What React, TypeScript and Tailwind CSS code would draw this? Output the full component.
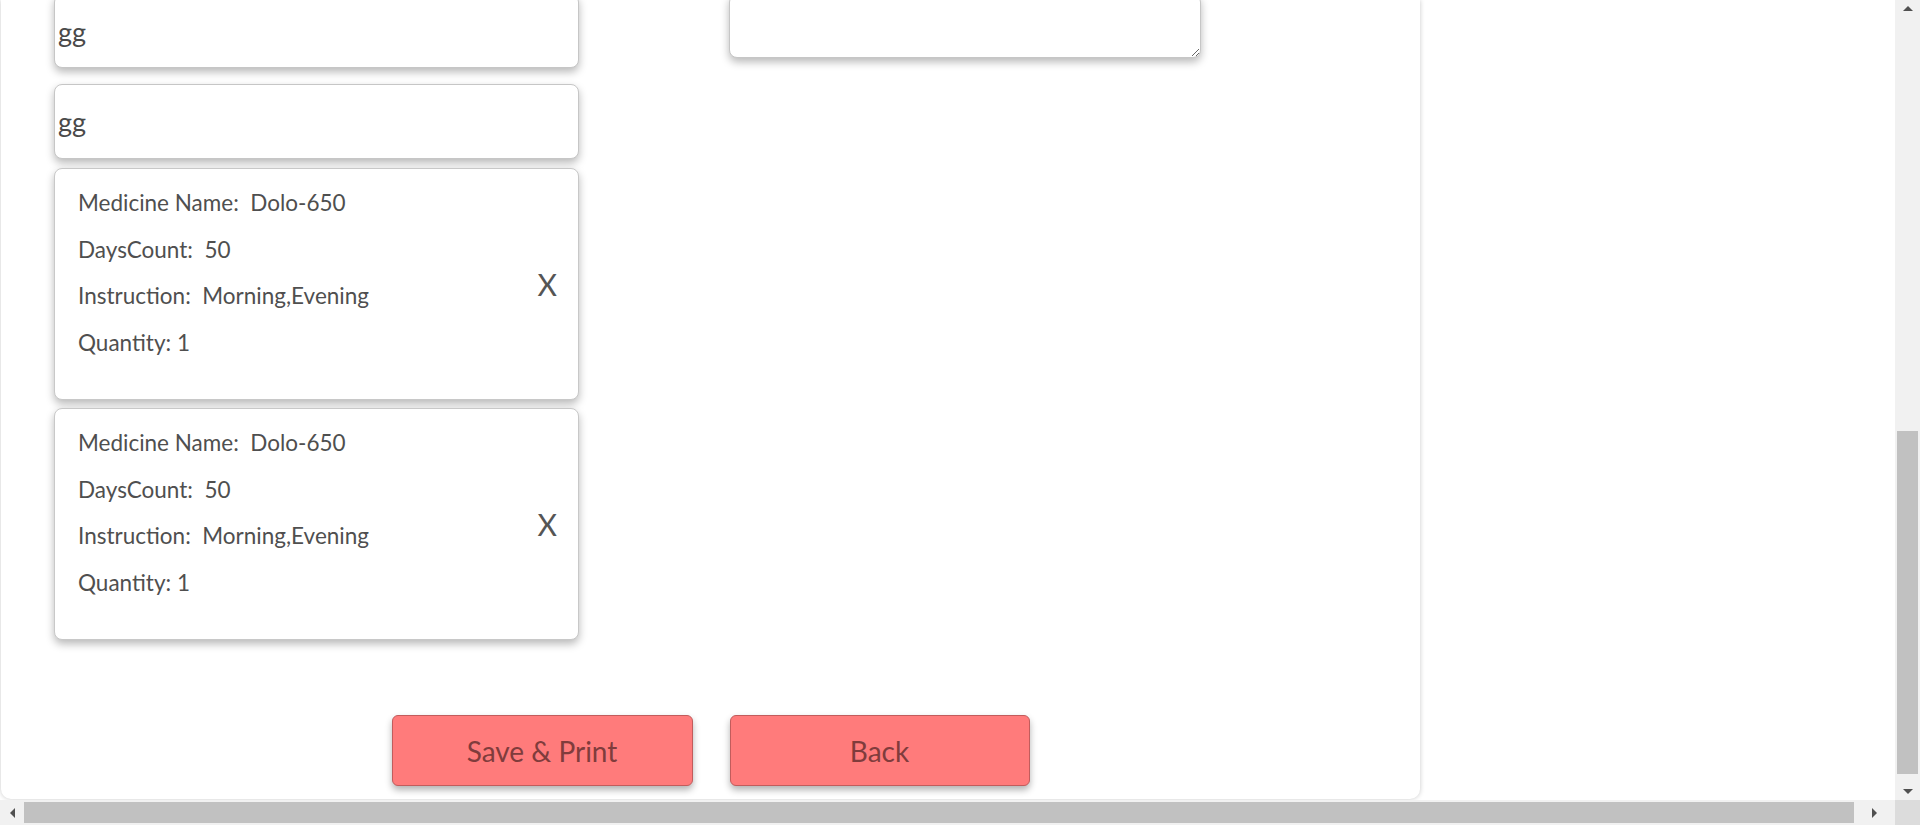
import React from "react";

type Medicine = {
  name: string;
  days: number;
  instruction: string;
  quantity: number;
};

const medicines: Medicine[] = [
  { name: "Dolo-650", days: 50, instruction: "Morning,Evening", quantity: 1 },
  { name: "Dolo-650", days: 50, instruction: "Morning,Evening", quantity: 1 },
];

function MedicineCard({ med }: { med: Medicine }) {
  return (
    <div className="flex h-[232px] items-center justify-between rounded-[8px] border border-[#c8c8c8] bg-white pl-[23px] pr-[21px] shadow-[0_4px_8px_rgba(0,0,0,0.28)]">
      <div className="flex flex-col gap-[16.5px] self-start pt-[19px] text-[22.5px] leading-[30px] text-[#4f4f4f]">
        <p>Medicine Name:{"\u00a0 "}{med.name}</p>
        <p>DaysCount:{"\u00a0 "}{med.days}</p>
        <p>Instruction:{"\u00a0 "}{med.instruction}</p>
        <p>Quantity:{"\u00a0"}{med.quantity}</p>
      </div>
      <button className="text-[30px] leading-none text-[#555]">X</button>
    </div>
  );
}

function Arrow({ dir }: { dir: "up" | "down" | "left" | "right" }) {
  const pts = {
    up: "0,6 5,1 10,6",
    down: "0,1 5,6 10,1",
    left: "6,0 1,5 6,10",
    right: "1,0 6,5 1,10",
  }[dir];
  const size = dir === "up" || dir === "down" ? "w-[10px] h-[7px]" : "w-[7px] h-[10px]";
  const vb = dir === "up" || dir === "down" ? "0 0 10 7" : "0 0 7 10";
  return (
    <svg viewBox={vb} className={size}>
      <polygon points={pts} fill="#505050" />
    </svg>
  );
}

export default function App() {
  return (
    <div className="flex h-[825px] w-[1920px] flex-col overflow-hidden bg-white font-['Lato',sans-serif]">
      <div className="flex min-h-0 flex-1">
        {/* page, scrolled to the bottom */}
        <div className="min-w-0 flex-1 overflow-hidden">
          <div className="ml-px flex h-[799px] w-[1419px] flex-col overflow-hidden rounded-b-[10px] bg-white shadow-[0_0_5px_rgba(0,0,0,0.22)]">
            <div className="-mt-[6px] flex pl-[53px]">
              <div className="flex w-[525px] flex-col">
                <input
                  readOnly
                  defaultValue="gg"
                  className="h-[74px] rounded-[8px] border border-[#c6c6c6] bg-white px-[3px] text-[27px] text-[#4a4a4a] shadow-[0_4px_8px_rgba(0,0,0,0.28)] outline-none"
                />
                <input
                  readOnly
                  defaultValue="gg"
                  className="mt-[16px] h-[75px] rounded-[8px] border border-[#c6c6c6] bg-white px-[3px] text-[27px] text-[#4a4a4a] shadow-[0_4px_8px_rgba(0,0,0,0.28)] outline-none"
                />
                <div className="mt-[9px] flex flex-col gap-[8px]">
                  {medicines.map((m, i) => (
                    <MedicineCard key={i} med={m} />
                  ))}
                </div>
              </div>
              <div className="ml-[150px] w-[472px] self-start">
                <textarea
                  readOnly
                  className="block h-[64px] w-full rounded-[8px] border border-[#c6c6c6] bg-white shadow-[0_4px_8px_rgba(0,0,0,0.28)] outline-none"
                />
              </div>
            </div>
            <div className="mt-[75px] flex justify-center gap-[37px]">
              <button className="h-[71px] w-[301px] rounded-[6px] border border-[#c25c5c] bg-[#ff7b7b] text-[28px] text-[#803c3c] shadow-[0_4px_7px_rgba(0,0,0,0.3)]">
                Save &amp; Print
              </button>
              <button className="h-[71px] w-[300px] rounded-[6px] border border-[#c25c5c] bg-[#ff7b7b] text-[28px] text-[#803c3c] shadow-[0_4px_7px_rgba(0,0,0,0.3)]">
                Back
              </button>
            </div>
          </div>
        </div>
        {/* vertical scrollbar */}
        <div className="flex w-[25px] flex-col bg-[#f1f1f1]">
          <div className="flex h-[17px] items-center justify-center">
            <Arrow dir="up" />
          </div>
          <div className="flex-1">
            <div className="mx-[2px] mt-[414px] h-[343px] bg-[#c1c1c1]" />
          </div>
          <div className="flex h-[17px] items-center justify-center">
            <Arrow dir="down" />
          </div>
        </div>
      </div>
      {/* horizontal scrollbar */}
      <div className="flex h-[25px] bg-[#f1f1f1]">
        <div className="flex flex-1 items-center">
          <div className="flex w-[24px] items-center justify-center">
            <Arrow dir="left" />
          </div>
          <div className="h-[21px] w-[1830px] bg-[#c1c1c1]" />
          <div className="flex flex-1 items-center justify-center">
            <Arrow dir="right" />
          </div>
        </div>
        <div className="w-[25px] bg-[#dcdcdc]" />
      </div>
    </div>
  );
}
